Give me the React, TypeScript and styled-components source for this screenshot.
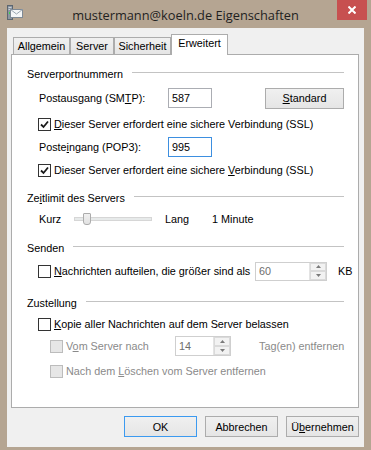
import React from 'react';
import styled, { createGlobalStyle } from 'styled-components';

const FONT = `"Liberation Sans", Arial, sans-serif`;

const GlobalStyle = createGlobalStyle`
    html, body {
        margin: 0;
        padding: 0;
        background: #b5a592;
    }
    body {
        width: 371px;
        height: 450px;
        overflow: hidden;
    }
`;

const WindowDiv = styled.div`
    width: 371px;
    height: 450px;
    box-sizing: border-box;
    background: #b5a592;
    display: flex;
    flex-direction: column;
    padding: 0 7px 3px 7px;
    font-family: ${FONT};
    font-size: 10.8px;
    color: #000;
`;

const TitleBar = styled.div`
    height: 28px;
    margin: 0 -7px;
    display: grid;
    grid-template-columns: 34px 1fr 34px;
    align-items: start;
`;

const TitleIcon = styled.svg`
    margin: 4px 0 0 7px;
`;

const TitleText = styled.div`
    font-family: "Open Sans", "Noto Sans", sans-serif;
    font-size: 12.8px;
    line-height: 30px;
    text-align: center;
    color: #1f1f1f;
    white-space: nowrap;
`;

const CloseButton = styled.div`
    width: 30px;
    height: 20px;
    background: #c75050;
    display: flex;
    align-items: center;
    justify-content: center;
`;

const ClientDiv = styled.div`
    flex: 1;
    background: #f0f0f0;
    display: flex;
    flex-direction: column;
    padding: 6px 5px 0 4px;
`;

const TabStrip = styled.div`
    display: flex;
    align-items: flex-end;
    height: 20px;
    padding-left: 2px;
`;

const Tab = styled.div<{ $active?: boolean; $w: number }>`
    box-sizing: border-box;
    width: ${p => p.$w}px;
    display: flex;
    align-items: center;
    justify-content: center;
    padding-bottom: ${p => (p.$active ? '4px' : '0')};
    height: ${p => (p.$active ? '21px' : '17px')};
    margin-bottom: ${p => (p.$active ? '-1px' : '0')};
    border: 1px solid #acacac;
    border-bottom: none;
    background: ${p => (p.$active ? '#ffffff' : 'linear-gradient(#f0f0f0, #e5e5e5)')};
    position: relative;
    z-index: ${p => (p.$active ? 1 : 0)};
    white-space: nowrap;
`;

const Panel = styled.div`
    box-sizing: border-box;
    height: 354px;
    background: #ffffff;
    border: 1px solid #acacac;
    padding: 9px 14px 0 15px;
    display: flex;
    flex-direction: column;
`;

const Row = styled.div<{ $mt?: number; $indent?: number }>`
    height: 20px;
    display: flex;
    align-items: center;
    margin-top: ${p => p.$mt || 0}px;
    padding-left: ${p => p.$indent || 0}px;
    white-space: nowrap;
`;

const HeaderLine = styled.div`
    flex: 1;
    height: 1px;
    background: #c3c3c3;
    margin: 0 0 4px 9px;
`;

const Label = styled.span<{ $w?: number; $disabled?: boolean; $ml?: number }>`
    display: inline-block;
    width: ${p => (p.$w ? `${p.$w}px` : 'auto')};
    margin-left: ${p => p.$ml || 0}px;
    flex: none;
    color: ${p => (p.$disabled ? '#8a8a8a' : '#000')};
`;

const TextInput = styled.div<{ $focused?: boolean }>`
    box-sizing: border-box;
    width: 44px;
    height: 20px;
    border: 1px solid ${p => (p.$focused ? '#3d8fe0' : '#abadb3')};
    background: #fff;
    padding-left: 3px;
    display: flex;
    align-items: center;
`;

const PushButton = styled.div<{ $w: number; $default?: boolean }>`
    box-sizing: border-box;
    width: ${p => p.$w}px;
    height: 21px;
    border: 1px solid ${p => (p.$default ? '#3c9af0' : '#acacac')};
    background: linear-gradient(#f0f0f0, #e5e5e5);
    display: flex;
    align-items: center;
    justify-content: center;
    flex: none;
`;

const RightButton = styled(PushButton)`
    margin-left: auto;
`;

const Box = styled.div<{ $disabled?: boolean }>`
    box-sizing: border-box;
    width: 13px;
    height: 13px;
    flex: none;
    margin-right: 3px;
    border: 1px solid ${p => (p.$disabled ? '#bcbcbc' : '#333333')};
    background: ${p => (p.$disabled ? '#e6e6e6' : '#ffffff')};
    display: flex;
    align-items: center;
    justify-content: center;
`;

const SliderBox = styled.div`
    position: relative;
    width: 78px;
    height: 20px;
    flex: none;
    margin-right: 13px;
`;

const SliderTrack = styled.div`
    position: absolute;
    left: 0;
    right: 0;
    top: 8px;
    height: 4px;
    box-sizing: border-box;
    border: 1px solid #d6d6d6;
    background: #e7eaea;
`;

const SliderThumb = styled.div`
    position: absolute;
    left: 9px;
    top: 4px;
    width: 8px;
    height: 12px;
    box-sizing: border-box;
    border: 1px solid #acacac;
    border-radius: 1px 1px 3px 3px;
    background: linear-gradient(#f0f0f0, #e2e2e2);
`;

const SpinBox = styled.div<{ $w: number; $h: number }>`
    box-sizing: border-box;
    width: ${p => p.$w}px;
    height: ${p => p.$h}px;
    border: 1px solid #cfcfcf;
    background: #fff;
    display: flex;
    flex: none;
    color: #6d6d6d;
`;

const SpinValue = styled.div`
    flex: 1;
    display: flex;
    align-items: center;
    padding-left: 3px;
`;

const SpinButtons = styled.div`
    width: 16px;
    display: flex;
    flex-direction: column;
    border-left: 1px solid #e3e3e3;
`;

const SpinHalf = styled.div`
    flex: 1;
    background: #f2f2f2;
    border: 1px solid #dadada;
    display: flex;
    align-items: center;
    justify-content: center;
`;

const ButtonRow = styled.div`
    display: flex;
    justify-content: flex-end;
    gap: 8px;
    margin-top: 8px;
`;

function CheckMark() {
    return (
        <svg width="9" height="9" viewBox="0 0 9 9">
            <path d="M1 4.5 L3.5 7 L8 1.5" fill="none" stroke="#1a1a1a" strokeWidth="1.8" />
        </svg>
    );
}

function CheckBox({ checked, disabled }: { checked?: boolean; disabled?: boolean }) {
    return <Box $disabled={disabled}>{checked && <CheckMark />}</Box>;
}

function Arrow({ up, color }: { up?: boolean; color: string }) {
    return (
        <svg width="5" height="3" viewBox="0 0 5 3">
            <path d={up ? 'M0 3 L2.5 0 L5 3 Z' : 'M0 0 L5 0 L2.5 3 Z'} fill={color} />
        </svg>
    );
}

function Spinner({ value, w, h }: { value: string; w: number; h: number }) {
    return (
        <SpinBox $w={w} $h={h}>
            <SpinValue>{value}</SpinValue>
            <SpinButtons>
                <SpinHalf><Arrow up color="#7a7a7a" /></SpinHalf>
                <SpinHalf><Arrow color="#7a7a7a" /></SpinHalf>
            </SpinButtons>
        </SpinBox>
    );
}

function GroupHeader({ title, mt }: { title: React.ReactNode; mt?: number }) {
    return (
        <Row $mt={mt}>
            <span>{title}</span>
            <HeaderLine />
        </Row>
    );
}

export default function App(): JSX.Element {
    return (
        <>
            <GlobalStyle />
            <WindowDiv>
                <TitleBar>
                    <TitleIcon width="16" height="16" viewBox="0 0 16 16">
                        <rect x="0.5" y="1.5" width="5" height="14" fill="#8c95a0" stroke="#5d6670" />
                        <rect x="1.5" y="3" width="3" height="1" fill="#c8d0d8" />
                        <rect x="1.5" y="5" width="3" height="1" fill="#c8d0d8" />
                        <rect x="2" y="8" width="2" height="2" fill="#3ad34a" />
                        <rect x="3.5" y="5.5" width="12" height="8" fill="#f4f6f8" stroke="#7f8a96" />
                        <path d="M3.5 5.5 L9.5 10 L15.5 5.5" fill="none" stroke="#9aa6b2" />
                    </TitleIcon>
                    <TitleText>mustermann@koeln.de Eigenschaften</TitleText>
                    <CloseButton>
                        <svg width="8" height="8" viewBox="0 0 8 8">
                            <path d="M0.5 0.5 L7.5 7.5 M7.5 0.5 L0.5 7.5" stroke="#ffffff" strokeWidth="2" />
                        </svg>
                    </CloseButton>
                </TitleBar>
                <ClientDiv>
                    <TabStrip>
                        <Tab $w={57}>Allgemein</Tab>
                        <Tab $w={44}>Server</Tab>
                        <Tab $w={57}>Sicherheit</Tab>
                        <Tab $w={57} $active>Erweitert</Tab>
                    </TabStrip>
                    <Panel>
                        <GroupHeader title="Serverportnummern" />
                        <Row $mt={4} $indent={12}>
                            <Label $w={129}>Postausgang (SM<u>T</u>P):</Label>
                            <TextInput>587</TextInput>
                            <RightButton $w={79}><u>S</u>tandard</RightButton>
                        </Row>
                        <Row $mt={6} $indent={11}>
                            <CheckBox checked />
                            <Label><u>D</u>ieser Server erfordert eine sichere Verbindung (SSL)</Label>
                        </Row>
                        <Row $mt={3} $indent={12}>
                            <Label $w={129}>Poste<u>i</u>ngang (POP3):</Label>
                            <TextInput $focused>995</TextInput>
                        </Row>
                        <Row $mt={3} $indent={11}>
                            <CheckBox checked />
                            <Label>Dieser Server erfordert eine sichere <u>V</u>erbindung (SSL)</Label>
                        </Row>

                        <GroupHeader mt={8} title={<>Ze<u>i</u>tlimit des Servers</>} />
                        <Row $mt={1} $indent={12}>
                            <Label $w={35}>Kurz</Label>
                            <SliderBox>
                                <SliderTrack />
                                <SliderThumb />
                            </SliderBox>
                            <Label $w={47}>Lang</Label>
                            <Label>1 Minute</Label>
                        </Row>

                        <GroupHeader mt={9} title="Senden" />
                        <Row $mt={3} $indent={11}>
                            <CheckBox />
                            <Label $w={201}><u>N</u>achrichten aufteilen, die größer sind als</Label>
                            <Spinner value="60" w={72} h={19} />
                            <Label $ml={11}>KB</Label>
                        </Row>

                        <GroupHeader mt={12} title="Zustellung" />
                        <Row $mt={1} $indent={11}>
                            <CheckBox />
                            <Label><u>K</u>opie aller Nachrichten auf dem Server belassen</Label>
                        </Row>
                        <Row $mt={2} $indent={23}>
                            <CheckBox disabled />
                            <Label $w={109} $disabled>V<u>o</u>m Server nach</Label>
                            <Spinner value="14" w={56} h={20} />
                            <Label $disabled $ml={28}>Tag(en) entfernen</Label>
                        </Row>
                        <Row $mt={5} $indent={23}>
                            <CheckBox disabled />
                            <Label $disabled>Nach dem <u>L</u>öschen vom Server entfernen</Label>
                        </Row>
                    </Panel>
                    <ButtonRow>
                        <PushButton $w={73} $default>OK</PushButton>
                        <PushButton $w={73}>Abbrechen</PushButton>
                        <PushButton $w={73}>Ü<u>b</u>ernehmen</PushButton>
                    </ButtonRow>
                </ClientDiv>
            </WindowDiv>
        </>
    );
}
